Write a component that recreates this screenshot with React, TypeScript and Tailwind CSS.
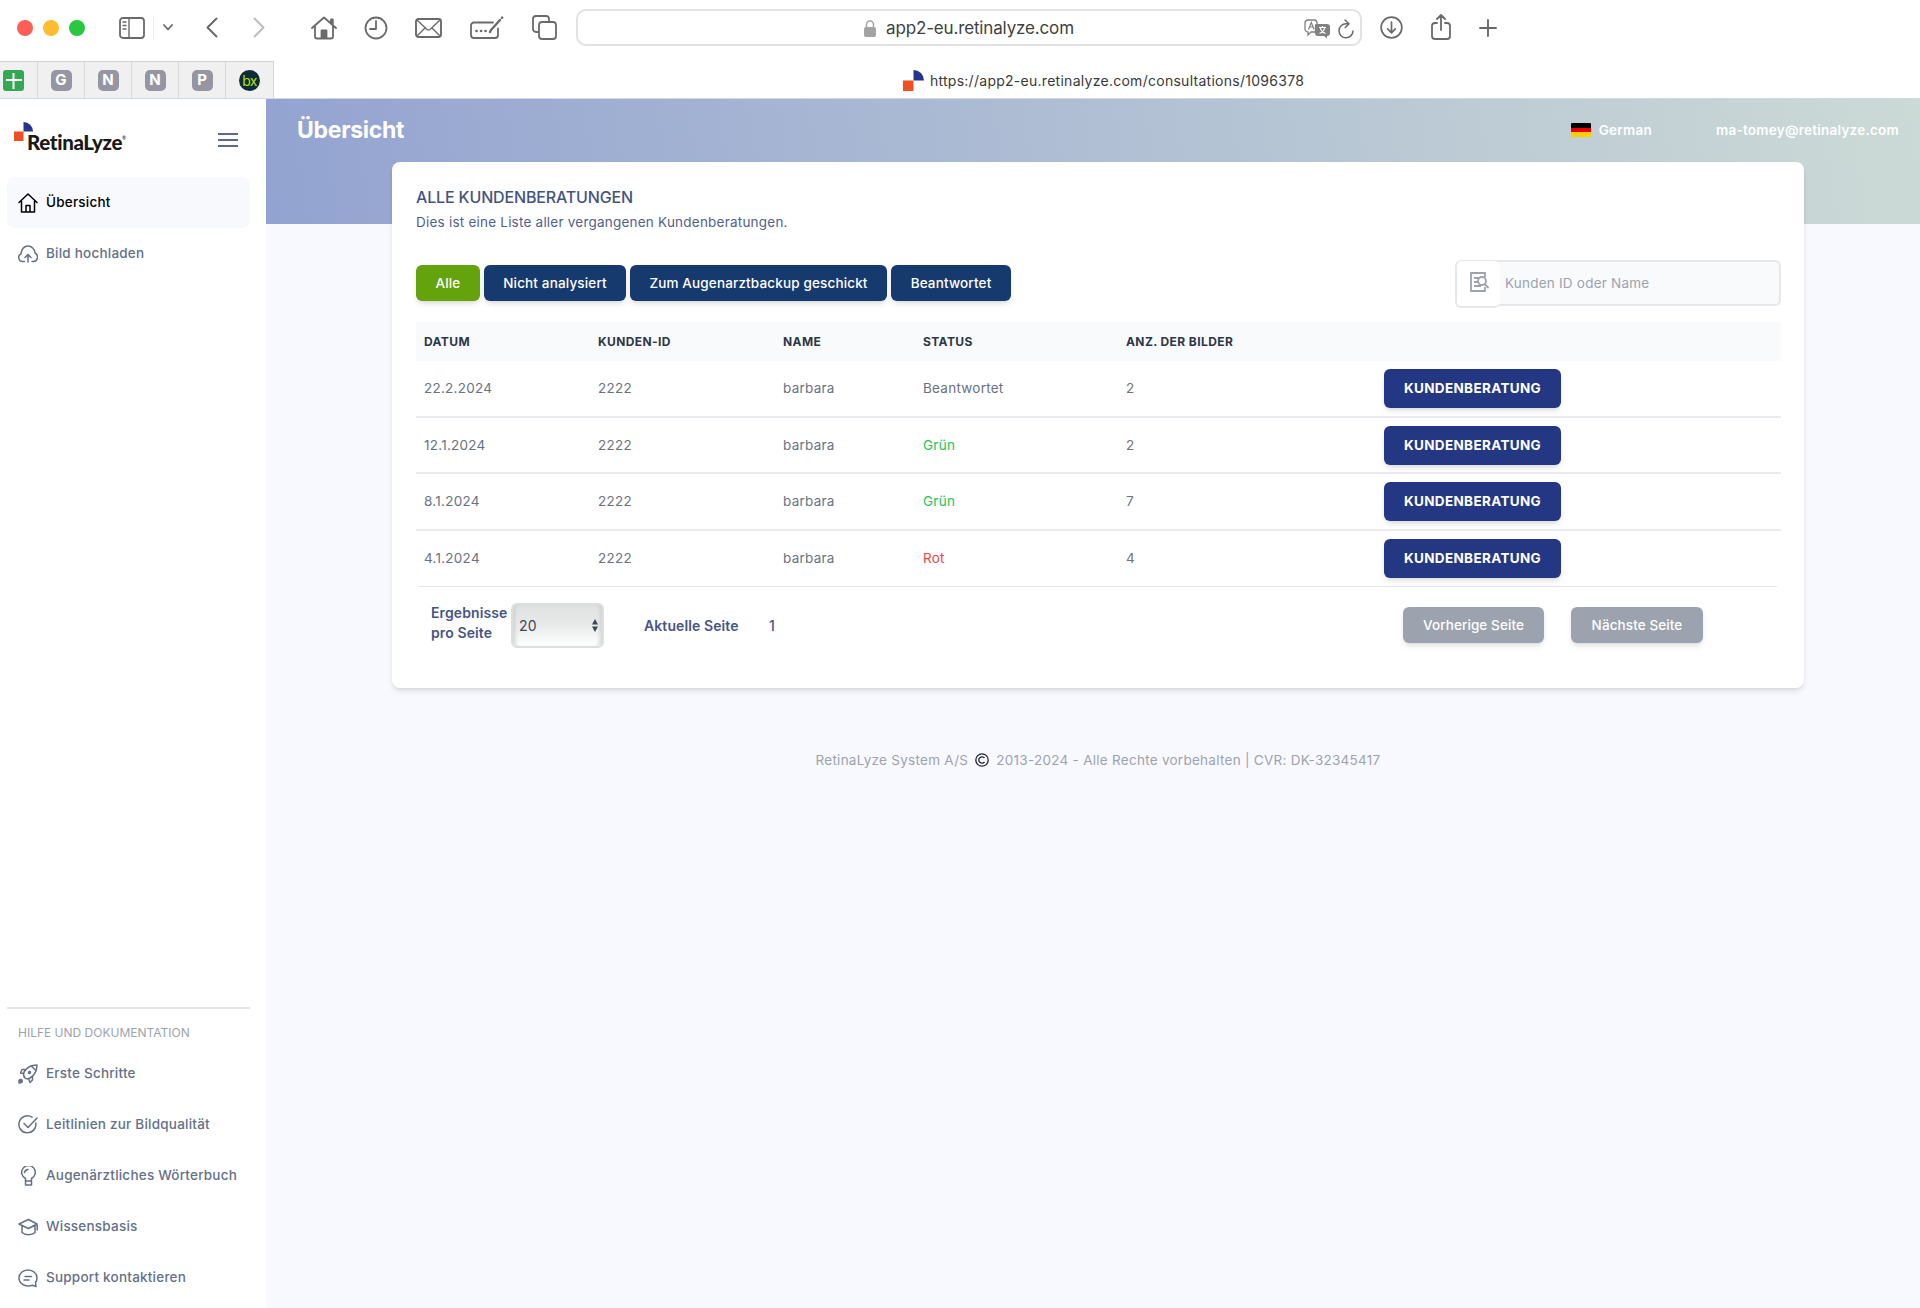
import type { ReactNode } from "react";

type Consultation = {
  date: string;
  customerId: string;
  name: string;
  status: string;
  statusClass: string;
  images: number;
};

const consultations: Consultation[] = [
  { date: "22.2.2024", customerId: "2222", name: "barbara", status: "Beantwortet", statusClass: "text-gray-500", images: 2 },
  { date: "12.1.2024", customerId: "2222", name: "barbara", status: "Grün", statusClass: "text-[#22c55e]", images: 2 },
  { date: "8.1.2024", customerId: "2222", name: "barbara", status: "Grün", statusClass: "text-[#22c55e]", images: 7 },
  { date: "4.1.2024", customerId: "2222", name: "barbara", status: "Rot", statusClass: "text-[#ef4444]", images: 4 },
];

const filters = [
  { label: "Alle", className: "w-16 bg-[#65a30d]" },
  { label: "Nicht analysiert", className: "w-[142px] bg-[#173a6e]" },
  { label: "Zum Augenarztbackup geschickt", className: "w-[257px] bg-[#173a6e]" },
  { label: "Beantwortet", className: "w-[120px] bg-[#173a6e]" },
];

const pinnedTabs = ["G", "N", "N", "P"];

function Icon({ children, className = "size-5", viewBox = "0 0 20 20", width = 1.5 }: { children: ReactNode; className?: string; viewBox?: string; width?: number }) {
  return (
    <svg className={`shrink-0 ${className}`} viewBox={viewBox} fill="none" stroke="currentColor" strokeWidth={width} strokeLinecap="round" strokeLinejoin="round">
      {children}
    </svg>
  );
}

function LogoMark({ className }: { className: string }) {
  return (
    <svg className={className} viewBox="0 0 20 20">
      <rect x="0" y="10" width="10" height="10" fill="#f04e23" />
      <path d="M10 0a10 10 0 0 1 10 10H10z" fill="#27348b" />
    </svg>
  );
}

function Toolbar() {
  return (
    <div className="flex h-[55px] items-center pl-[17px] text-[#6a6a6a]">
      <div className="flex gap-[10px]">
        <span className="size-4 rounded-full bg-[#ff5f57]" />
        <span className="size-4 rounded-full bg-[#febc2e]" />
        <span className="size-4 rounded-full bg-[#28c840]" />
      </div>
      <Icon className="ml-[34px] h-[22px] w-[26px]" viewBox="0 0 26 22" width={1.8}>
        <rect x="1" y="1" width="24" height="20" rx="3" />
        <path d="M10 1v20M4 5h3M4 8.500h3M4 12h3" strokeWidth="1.400" />
      </Icon>
      <span className="ml-2 h-6 w-px bg-[#ececec]" />
      <Icon className="ml-[9px] h-[7px] w-[10px]" viewBox="0 0 10 7" width={1.8}>
        <path d="M1 1l4 4.500L9 1" />
      </Icon>
      <Icon className="ml-[33px] h-[21px] w-3" viewBox="0 0 12 21" width={2}>
        <path d="M10.500 1.500L1.500 10.500l9 9" />
      </Icon>
      <Icon className="ml-[35px] h-[21px] w-3 text-[#bdbdbd]" viewBox="0 0 12 21" width={2}>
        <path d="M1.500 1.500l9 9-9 9" />
      </Icon>
      <Icon className="ml-[46px] h-6 w-[26px]" viewBox="0 0 26 24" width={1.8}>
        <path d="M1 12L13 1.500 25 12M4 10v10.500a2 2 0 0 0 2 2h14a2 2 0 0 0 2-2V10M20 7V3.500h1.800V9" />
        <path d="M10.500 22v-7.500h5V22z" fill="currentColor" />
      </Icon>
      <Icon className="ml-[27px] size-6" viewBox="0 0 24 24" width={1.8}>
        <circle cx="12" cy="12" r="10.500" />
        <path d="M12 5v8H6" />
      </Icon>
      <Icon className="ml-[27px] h-5 w-[27px]" viewBox="0 0 27 20" width={1.9}>
        <rect x="1" y="1" width="25" height="18" rx="2.500" />
        <path d="M2 2l10 9.500q1.500 1.200 3 0L25 2M2 18l8-8M25 18l-8-8" strokeWidth="1.400" />
      </Icon>
      <Icon className="ml-[28px] h-6 w-[34px]" viewBox="0 0 34 24" width={1.8}>
        <path d="M23 6.500H4a3 3 0 0 0-3 3V19a3 3 0 0 0 3 3h21a3 3 0 0 0 3-3v-6.500" />
        <path d="M30 4L21 14l-1 2" strokeWidth="2.400" />
        <path d="M32 1.800h.1" strokeWidth="2.600" />
        <path d="M6.500 15h.1M11 15h.1M15.500 15h.1" strokeWidth="2.600" />
      </Icon>
      <Icon className="ml-[28px] size-[25px]" viewBox="0 0 25 25" width={1.8}>
        <path d="M6 17H4a3 3 0 0 1-3-3V4a3 3 0 0 1 3-3h10a3 3 0 0 1 3 3v2" />
        <rect x="7" y="7" width="17" height="17" rx="3" />
      </Icon>
      <div className="ml-[19px] flex h-[37px] w-[786px] items-center rounded-[10px] border-2 border-[#e2e2e2] bg-white pt-[2px]">
        <svg className="ml-[286px] h-[17px] w-3" viewBox="0 0 12 17">
          <path d="M2.500 8V4.500a3.500 3.500 0 0 1 7 0V8" fill="none" stroke="#a3a3a3" strokeWidth="1.500" />
          <rect y="7" width="12" height="10" rx="2" fill="#a3a3a3" />
        </svg>
        <span className="ml-[10px] w-[188px] text-[17px] tracking-[-0.15px] whitespace-nowrap text-[#3f3f3f]">app2-eu.retinalyze.com</span>
        <svg className="ml-[230px] h-5 w-[26px]" viewBox="0 0 26 20">
          <path d="M4 1h6a3 3 0 0 1 3 3v2h-1.500v7H7l-3 3v-3a3 3 0 0 1-3-3V4a3 3 0 0 1 3-3z" fill="none" stroke="#808080" strokeWidth="1.300" />
          <path d="M4.500 10.500L7.300 3.500l2.700 7M5.500 8h3.500" fill="none" stroke="#808080" strokeWidth="1.200" />
          <path d="M14 5h9a3 3 0 0 1 3 3v6a3 3 0 0 1-3 3v2.500L20 17h-6a3 3 0 0 1-3-3V8a3 3 0 0 1 3-3z" fill="#808080" />
          <path d="M15 8.500h7M18.500 7v1.500M20.700 8.500c-.5 3-2.500 5-5.200 6M16.300 8.500c.5 3 2.500 5 5.200 6" fill="none" stroke="#fff" strokeWidth="1.200" />
        </svg>
        <Icon className="ml-2 h-[20px] w-4" viewBox="0 0 16 20" width={1.5}>
          <path d="M10.500 4.800H8A7 7 0 1 0 15 12M7 1l4 3.800L7.200 8.500" />
        </Icon>
      </div>
      <Icon className="ml-[18px] size-[23px]" viewBox="0 0 24 24" width={1.8}>
        <circle cx="12" cy="12" r="10.800" />
        <path d="M12 6.500v11M8 13.500l4 4 4-4" />
      </Icon>
      <Icon className="ml-[28px] h-[26px] w-5 -translate-y-px" viewBox="0 0 20 26" width={1.8}>
        <path d="M6 9H4a3 3 0 0 0-3 3v10a3 3 0 0 0 3 3h12a3 3 0 0 0 3-3V12a3 3 0 0 0-3-3h-2M10 16V1.500M6 5l4-4 4 4" />
      </Icon>
      <Icon className="ml-[28px] size-[18px]" viewBox="0 0 18 18" width={1.9}>
        <path d="M9 1v16M1 9h16" />
      </Icon>
    </div>
  );
}

function TabBar() {
  return (
    <div className="flex h-[44px] items-end border-b border-[#8b9db8]/40">
      <div className="flex h-[37px] w-[274px] shrink-0 border-t border-[#cfcfcf] bg-[#f0f0f0]">
        <div className="flex w-[38px] items-center border-r border-[#d8d8d8] pt-px pl-[3px]">
          <div className="flex size-[21px] items-center justify-center rounded-[3px] bg-[#34a853]">
            <svg className="size-4" viewBox="0 0 16 16" stroke="#fff" strokeWidth="2">
              <path d="M0 7h16M7.500 0v16" />
            </svg>
          </div>
        </div>
        {pinnedTabs.map((letter, i) => (
          <div key={i} className="flex w-[47px] items-center justify-center border-r border-[#d8d8d8] pt-px">
            <span className="flex size-[21px] items-center justify-center rounded-[5px] bg-[#9696a2] text-[15px] font-bold text-white">{letter}</span>
          </div>
        ))}
        <div className="flex w-12 items-center justify-center border-r border-[#d8d8d8] pt-px">
          <span className="flex size-[21px] items-center justify-center rounded-full bg-[#0c2d38] pb-px text-[14px] tracking-[-0.8px] text-[#b6e000]">bx</span>
        </div>
      </div>
      <div className="flex h-[37px] flex-1 items-center justify-center pt-[2px] pl-[13px]">
        <LogoMark className="mr-[6px] size-[21px]" />
        <span className="text-[14px] tracking-[0.27px] text-[#3a3a3a]">https://app2-eu.retinalyze.com/consultations/1096378</span>
      </div>
    </div>
  );
}

function NavItem({ label, icon, active = false }: { label: string; icon: ReactNode; active?: boolean }) {
  return (
    <a className={`flex h-[51px] items-center gap-2 rounded-lg pl-[11px] text-[13.5px] font-medium tracking-[0.22px] whitespace-nowrap ${active ? "bg-[#f8f9fd] text-black" : "text-[#64708a]"}`}>
      {icon}
      {label}
    </a>
  );
}

function Sidebar() {
  return (
    <aside className="flex w-[266px] shrink-0 flex-col bg-white pr-4 pl-[7px]">
      <div className="flex h-[78px] items-start justify-between pt-[23px] pr-[12px] pl-[7px]">
        <div className="flex">
          <LogoMark className="size-[19px]" />
          <span className="mt-[5px] -ml-[6px] font-[Lato] text-[20.5px] font-black tracking-[-0.35px] text-[#1a1a18]">RetinaLyze</span>
          <span className="mt-[13px] font-[Lato] text-[5px]">®</span>
        </div>
        <div className="mt-[11px] flex w-5 flex-col gap-1">
          <span className="h-[2px] bg-[#5b6a92]" />
          <span className="h-[2px] bg-[#5b6a92]" />
          <span className="h-[2px] bg-[#5b6a92]" />
        </div>
      </div>
      <NavItem
        active
        label="Übersicht"
        icon={
          <Icon>
            <path d="M1 9.500L10 1l9 8.500M3.500 8v11h13V8M8 19v-6.500h4V19" />
          </Icon>
        }
      />
      <NavItem
        label="Bild hochladen"
        icon={
          <Icon>
            <path d="M6.500 17.500H4.500a4 4 0 0 1-1.500-7.600C3 5 6.500 2 10 2s6.800 2.800 7 7a4.500 4.500 0 0 1-1.500 8.500H14M10 18v-7M7 13.500l3-3 3 3" />
          </Icon>
        }
      />
      <div className="mt-auto border-t-2 border-[#e5e7eb] pt-[16px] pl-[11px] text-[12px] leading-4 text-[#9ca3af]">HILFE UND DOKUMENTATION</div>
      <div className="mt-[7px] mb-[5px]">
        <NavItem
          label="Erste Schritte"
          icon={
            <Icon>
              <path d="M19 1c-6 0-10 2-13 7-1 3 0 5 1 6s3 1 5 0c5-3 7-7 7-13zM7 5.500H4L2.500 9l3 .5M14.500 12.500V16L12 18.500l-1.500-4M13 1.800l5.200 5" />
              <circle cx="11.500" cy="8.500" r="1" fill="currentColor" />
              <path d="M1 19v-2.500a1.700 1.700 0 1 1 1.800 2.300z" fill="currentColor" />
            </Icon>
          }
        />
        <NavItem
          label="Leitlinien zur Bildqualität"
          icon={
            <Icon>
              <path d="M14 2.200A8.500 8.500 0 1 0 17.800 8M6 8.500l4 4L19 3" />
            </Icon>
          }
        />
        <NavItem
          label="Augenärztliches Wörterbuch"
          icon={
            <Icon>
              <path d="M7.500 15v-2.500a6.800 6.800 0 1 1 6 0V15zM7.500 15v4h6v-4M6.500 6.500a4 4 0 0 1 3.500-3" />
            </Icon>
          }
        />
        <NavItem
          label="Wissensbasis"
          icon={
            <Icon>
              <path d="M1 7l9.500-4.500L19 7l-8.500 4.500zM4 8.500v7c3 3 10 3 13 0v-7M19.200 8v5" />
            </Icon>
          }
        />
        <NavItem
          label="Support kontaktieren"
          icon={
            <Icon>
              <path d="M18 18.500l-3.500-1.200C8 19.500 1 16 1 10c0-4.500 4-8 9-8s9 3.500 9 8c0 2-.8 3.500-1.500 4.500zM7 8.500h6.500M6 12h5" />
            </Icon>
          }
        />
      </div>
    </aside>
  );
}

function ConsultationTable() {
  return (
    <table className="mt-4 w-full table-fixed border-collapse text-left text-[13.5px] tracking-[0.25px] text-gray-500">
      <colgroup>
        <col className="w-[174px]" />
        <col className="w-[185px]" />
        <col className="w-[140px]" />
        <col className="w-[203px]" />
        <col className="w-[258px]" />
        <col />
      </colgroup>
      <thead className="bg-[#f9fafb]">
        <tr className="h-[39px] text-[12px] tracking-[0.4px] text-[#2d3748]">
          <th className="pl-2 font-bold">DATUM</th>
          <th className="pl-2 font-bold">KUNDEN-ID</th>
          <th className="pl-2 font-bold">NAME</th>
          <th className="pl-2 font-bold">STATUS</th>
          <th className="pl-2 font-bold">ANZ. DER BILDER</th>
          <th />
        </tr>
      </thead>
      <tbody>
        {consultations.map((row, i) => (
          <tr key={row.date} className={`h-[56.200px] ${i < consultations.length - 1 ? "border-b-2 border-[#e9ebee]" : ""}`}>
            <td className="pl-2">{row.date}</td>
            <td className="pl-2">{row.customerId}</td>
            <td className="pl-2">{row.name}</td>
            <td className={`pl-2 ${row.statusClass}`}>{row.status}</td>
            <td className="pl-2">{row.images}</td>
            <td className="pl-2">
              <button className="h-[39px] w-[177px] rounded-md bg-[#243782] text-[13.5px] font-bold tracking-[0.35px] text-white shadow-md">KUNDENBERATUNG</button>
            </td>
          </tr>
        ))}
      </tbody>
    </table>
  );
}

function Pagination() {
  return (
    <div className="mr-1 ml-[3px] flex h-[78px] items-center border-t border-[#e2e5e9] pl-3 text-[14px] font-semibold tracking-[0.1px] text-[#475584]">
      <div className="w-20 pb-[5px] leading-5">
        Ergebnisse
        <br />
        pro Seite
      </div>
      <div className="flex h-[45px] w-[93px] items-center justify-between rounded-md border-2 border-[#dcdee0] bg-linear-to-b from-[#e0e2e2] via-[#e9ebeb] to-white pr-1 pl-[6px] font-normal text-[#3d4657] shadow-[inset_5px_0_4px_-3px_#cfd1d2,inset_-5px_0_4px_-3px_#cfd1d2]">
        20
        <svg className="h-[13px] w-[6px]" viewBox="0 0 6 13" fill="#3d4657">
          <path d="M3 0l3 5.500H0zM3 13l3-5.500H0z" />
        </svg>
      </div>
      <span className="ml-[40px] w-[125px]">Aktuelle Seite</span>
      <span className="font-medium">1</span>
      <div className="mr-[74px] ml-auto flex gap-[27px] text-[13.5px] font-medium text-white">
        <button className="h-9 w-[141px] rounded-md bg-[#9ca3af] shadow-md">Vorherige Seite</button>
        <button className="h-9 w-[132px] rounded-md bg-[#9ca3af] shadow-md">Nächste Seite</button>
      </div>
    </div>
  );
}

export default function App() {
  return (
    <div className="flex h-[1308px] w-[1920px] flex-col overflow-hidden bg-white font-[Inter,sans-serif]">
      <Toolbar />
      <TabBar />
      <div className="flex flex-1">
        <Sidebar />
        <main className="flex-1 bg-[#f8f9ff]">
          <header className="flex h-[125px] items-start bg-linear-[80deg] from-[#93a3d1] to-[#ccdad6] pt-[17px] pr-[21px] pl-[31px] font-semibold text-white">
            <h1 className="text-[23px] leading-7 font-bold tracking-[-0.3px]">Übersicht</h1>
            <div className="ml-auto flex items-center pt-1 text-[13.5px] leading-5 tracking-[0.25px]">
              <div className="mr-2 flex h-[14px] w-5 flex-col overflow-hidden rounded-[1px]">
                <span className="flex-1 bg-black" />
                <span className="flex-1 bg-[#e60000]" />
                <span className="flex-1 bg-[#ffce00]" />
              </div>
              German
              <span className="ml-16">ma-tomey@retinalyze.com</span>
            </div>
          </header>
          <section className="relative mt-[-62px] ml-[126px] h-[526px] w-[1412px] rounded-lg bg-white pt-[23px] pr-[23px] pl-6 shadow-md">
            <h2 className="text-[16px] leading-6 font-medium tracking-[-0.15px] text-[#45547f]">ALLE KUNDENBERATUNGEN</h2>
            <p className="mt-[3px] text-[13.5px] leading-5 tracking-[0.22px] text-[#52618b]">Dies ist eine Liste aller vergangenen Kundenberatungen.</p>
            <div className="mt-[28px] flex items-center gap-1">
              {filters.map((filter) => (
                <button key={filter.label} className={`h-9 rounded-md text-[13.5px] font-medium tracking-[0.15px] whitespace-nowrap text-white shadow-md ${filter.className}`}>
                  {filter.label}
                </button>
              ))}
              <div className="ml-auto flex h-[46px] w-[326px] items-center rounded-md border-2 border-[#e5e7eb] bg-[#f9fafb] text-[13.5px] tracking-[0.22px] text-[#9ca3af]">
                <div className="-mb-[3px] -ml-[2px] flex h-[47px] w-[45px] items-center justify-center rounded-md border-b-2 border-l-2 border-[#e5e7eb] bg-white pb-1">
                  <Icon width={1.8}>
                    <path d="M16 15v4H2V1h14v4M5 6h5M5 10h4M5 14h7" strokeLinecap="butt" strokeLinejoin="miter" />
                    <circle cx="13" cy="9" r="4" />
                    <path d="M15.500 12l3.500 3.500" />
                  </Icon>
                </div>
                <span className="ml-[5px]">Kunden ID oder Name</span>
              </div>
            </div>
            <ConsultationTable />
            <Pagination />
          </section>
          <footer className="mt-[62px] ml-[126px] flex w-[1412px] items-center justify-center text-[13.5px] leading-5 tracking-[0.27px] text-[#9ca3af]">
            RetinaLyze System A/S
            <svg className="mx-[7px] size-[14px]" viewBox="0 0 14 14" fill="none" stroke="#1f2937" strokeWidth="1.300">
              <circle cx="7" cy="7" r="6.200" />
              <path d="M9.500 5a3.200 3.200 0 1 0 0 4" />
            </svg>
            2013-2024 - Alle Rechte vorbehalten | CVR: DK-32345417
          </footer>
        </main>
      </div>
    </div>
  );
}
